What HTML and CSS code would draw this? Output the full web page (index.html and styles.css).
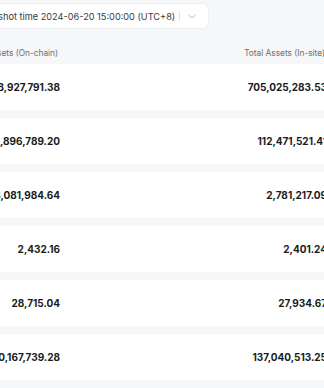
FILE: index.html
```html
<!DOCTYPE html>
<html lang="en">
<head>
    <meta charset="UTF-8">
    <meta name="viewport" content="width=device-width, initial-scale=1.0">
    <title>Proof of Reserves</title>
    <link rel="stylesheet" href="styles.css">
</head>
<body>
    <div class="page">
        <div class="toolbar">
            <div class="snapshot-select">
                <span class="snapshot-text">Snapshot time 2024-06-20 15:00:00 (UTC+8)</span>
                <span class="divider"></span>
                <svg class="chevron" width="8" height="5" viewBox="0 0 8 5">
                    <path d="M0.5 1 L4 4 L7.5 1" fill="none" stroke="#b8bcc4" stroke-width="1"/>
                </svg>
            </div>
        </div>
        <div class="table">
            <div class="row head">
                <div class="cell onchain">Total Assets (On-chain)</div>
                <div class="cell insite">Total Assets (In-site)</div>
            </div>
            <div class="row">
                <div class="cell onchain">748,927,791.38</div>
                <div class="cell insite">705,025,283.53</div>
            </div>
            <div class="row">
                <div class="cell onchain">118,896,789.20</div>
                <div class="cell insite">112,471,521.41</div>
            </div>
            <div class="row">
                <div class="cell onchain">3,081,984.64</div>
                <div class="cell insite">2,781,217.09</div>
            </div>
            <div class="row">
                <div class="cell onchain">2,432.16</div>
                <div class="cell insite">2,401.24</div>
            </div>
            <div class="row">
                <div class="cell onchain">28,715.04</div>
                <div class="cell insite">27,934.67</div>
            </div>
            <div class="row">
                <div class="cell onchain">140,167,739.28</div>
                <div class="cell insite">137,040,513.25</div>
            </div>
        </div>
    </div>
</body>
</html>
```

FILE: styles.css
```css
html, body {
    margin: 0;
    padding: 0;
    overflow: hidden;
}
body {
    font-family: Inter, "Noto Sans", sans-serif;
    background-color: #f6f7f9;
    color: #1b1b1b;
}
.page {
    width: 400px;
    margin-left: -36px;
}
.toolbar {
    padding-top: 3px;
    height: 42px;
    box-sizing: border-box;
}
.snapshot-select {
    display: inline-flex;
    align-items: center;
    height: 26px;
    box-sizing: border-box;
    padding: 0 12px 0 11px;
    background-color: white;
    border: 1px solid #eceef1;
    border-radius: 6px;
}
.snapshot-text {
    font-size: 9.2px;
    color: #3a3a3a;
    white-space: nowrap;
}
.divider {
    width: 1px;
    height: 10px;
    background-color: #e2e4e8;
    margin: 0 8px 0 4px;
}
.chevron {
    display: block;
}
.table {
    display: flex;
    flex-direction: column;
    gap: 8px;
}
.row {
    display: flex;
    height: 46px;
    align-items: center;
    background-color: white;
    font-size: 10px;
    font-weight: 700;
}
.row.head {
    height: 22px;
    margin-bottom: -8px;
    background-color: transparent;
    font-size: 8.3px;
    font-weight: 400;
    color: #6f6f6f;
}
.cell {
    text-align: right;
    white-space: nowrap;
    flex-shrink: 0;
}
.onchain {
    width: 96px;
}
.insite {
    width: 267px;
}
.row.head .onchain {
    width: 94px;
}
.row.head .insite {
    width: 267px;
}
```
